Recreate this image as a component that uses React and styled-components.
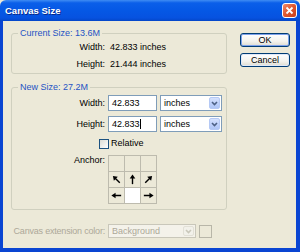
import React from "react"
import styled, { createGlobalStyle } from "styled-components"

const Global = createGlobalStyle`
  html, body {
    margin: 0;
    padding: 0;
    width: 300px;
    height: 252px;
    overflow: hidden;
    background: #ece9d8;
  }
  * { box-sizing: border-box; }
`

const Window = styled.div`
  width: 300px;
  height: 252px;
  display: flex;
  flex-direction: column;
  font-family: "Liberation Sans", Arial, sans-serif;
  font-size: 9px;
  color: #000;
  background: #ece9d8;
`

const TitleBar = styled.div`
  height: 21px;
  flex: none;
  display: flex;
  align-items: center;
  justify-content: space-between;
  padding: 0 3px 0 5px;
  background: linear-gradient(180deg, #3f8cf3 0%, #0b5fe9 14%, #0558e5 50%, #0652e0 85%, #0446c8 100%);
  border-radius: 6px 6px 0 0;
`

const Title = styled.span`
  color: #fff;
  font-weight: bold;
  font-size: 9.5px;
  text-shadow: 1px 1px 0 #0a2a8a;
`

const CloseButton = styled.div`
  width: 15px;
  height: 15px;
  border: 1px solid #fff;
  border-radius: 3px;
  background: linear-gradient(135deg, #f08a6c 0%, #e0572f 50%, #c8401c 100%);
  display: flex;
  align-items: center;
  justify-content: center;
`

const Frame = styled.div`
  flex: 1;
  display: flex;
  border: solid #0a45d2;
  border-width: 0 4px 4px 3px;
`

const Body = styled.div`
  flex: 1;
  display: flex;
  gap: 13px;
  padding: 7px 0 0 8px;
`

const Main = styled.div`
  width: 216px;
  display: flex;
  flex-direction: column;
`

const Group = styled.fieldset`
  margin: ${p => p.$mt || 0}px 0 0 0;
  padding: ${p => p.$pt}px 0 ${p => p.$pb}px 0;
  border: 1px solid #d0d0bf;
  border-radius: 3px;
  display: flex;
  flex-direction: column;
  gap: ${p => p.$gap}px;
  min-width: 0;
`

const Legend = styled.legend`
  margin-left: 6px;
  padding: 0 2px;
  color: #2553c4;
  font-size: 9px;
  line-height: 11px;
`

const Row = styled.div`
  display: grid;
  grid-template-columns: 93px auto;
  column-gap: ${p => p.$gap || 3}px;
  align-items: ${p => p.$align || "center"};
  justify-content: start;
  line-height: 11px;
`

const Label = styled.span`
  text-align: right;
  white-space: nowrap;
  color: ${p => (p.$disabled ? "#aca899" : "#000")};
  letter-spacing: ${p => (p.$tight ? "-0.2px" : "normal")};
`

const Value = styled.span`
  white-space: pre;
`

const Controls = styled.div`
  display: flex;
  gap: 3px;
`

const TextInput = styled.div`
  width: 49px;
  height: 16px;
  border: 1px solid #7f9db9;
  background: #fff;
  padding-left: 3px;
  display: flex;
  align-items: center;
`

const Caret = styled.span`
  width: 1px;
  height: 10px;
  background: #000;
`

const Select = styled.div`
  width: ${p => p.$w}px;
  height: ${p => p.$h || 16}px;
  border: 1px solid ${p => (p.$disabled ? "#c9c7ba" : "#7f9db9")};
  background: ${p => (p.$disabled ? "#f4f2ea" : "#fff")};
  color: ${p => (p.$disabled ? "#aca899" : "#000")};
  display: flex;
  align-items: center;
  justify-content: space-between;
  padding: 1px 1px 1px 3px;
`

const DropButton = styled.div`
  width: 11px;
  align-self: stretch;
  border-radius: 2px;
  display: flex;
  align-items: center;
  justify-content: center;
  background: ${p =>
    p.$disabled
      ? "#f2f1ea"
      : "linear-gradient(180deg, #d6e2fd 0%, #bccffa 60%, #afc6f6 100%)"};
  border: 1px solid ${p => (p.$disabled ? "#e2e0d6" : "#b5c9f5")};
`

const CheckRow = styled.div`
  display: flex;
  align-items: center;
  gap: 2px;
  padding-left: 87px;
  margin-top: 1px;
  margin-bottom: 1px;
  line-height: 11px;
`

const CheckBox = styled.span`
  width: 10px;
  height: 10px;
  border: 1px solid #1c5180;
  background: linear-gradient(135deg, #dcdcd5 0%, #fff 100%);
`

const AnchorGrid = styled.div`
  display: grid;
  grid-template-columns: repeat(3, 15px);
  grid-template-rows: repeat(3, 15px);
  gap: 1px;
  padding: 1px;
  background: #bdbbae;
  width: 49px;
`

const Cell = styled.div`
  background: ${p => (p.$active ? "#fff" : "#ece9d8")};
  display: flex;
  align-items: center;
  justify-content: center;
`

const ExtRow = styled.div`
  display: grid;
  grid-template-columns: 94px auto auto;
  column-gap: 3px;
  align-items: center;
  justify-content: start;
  margin-top: 14px;
  line-height: 11px;
`

const Swatch = styled.span`
  width: 13px;
  height: 13px;
  border: 1px solid #b8b6a8;
  background: #ece9d8;
`

const Buttons = styled.div`
  display: flex;
  flex-direction: column;
  gap: 6px;
  padding-top: 5px;
`

const Button = styled.div`
  width: 50px;
  height: 14px;
  border: 1px solid #003c74;
  border-radius: 3px;
  background: linear-gradient(180deg, #ffffff 0%, #f4f3ee 60%, #dedcd0 100%);
  box-shadow: inset 0 0 0 1px ${p => (p.$default ? "#7ea2ec" : "#dfe8f8")};
  display: flex;
  align-items: center;
  justify-content: center;
  font-size: 9px;
`

const Chevron = ({ color }) => (
  <svg width="7" height="5" viewBox="0 0 7 5">
    <path d="M1 1 L3.5 3.5 L6 1" fill="none" stroke={color} strokeWidth="1.6" />
  </svg>
)

const Arrow = ({ angle }) => (
  <svg width="13" height="13" viewBox="0 0 14 14" style={{ transform: `rotate(${angle}deg)` }}>
    <line x1="7" y1="12" x2="7" y2="5" stroke="#000" strokeWidth="1.5" />
    <polygon points="7,1.5 4,6 10,6" fill="#000" />
  </svg>
)

const anchorCells = [null, null, null, -45, 0, 45, -90, "active", 90]

function InfoRow({ label, value }) {
  return (
    <Row $gap={5}>
      <Label>{label}</Label>
      <Value>{value}</Value>
    </Row>
  )
}

function SizeRow({ label, value, caret }) {
  return (
    <Row>
      <Label>{label}</Label>
      <Controls>
        <TextInput>
          {value}
          {caret && <Caret />}
        </TextInput>
        <Select $w={62}>
          inches
          <DropButton>
            <Chevron color="#4d6185" />
          </DropButton>
        </Select>
      </Controls>
    </Row>
  )
}

export default function App() {
  return (
    <Window>
      <Global />
      <TitleBar>
        <Title>Canvas Size</Title>
        <CloseButton>
          <svg width="9" height="9" viewBox="0 0 9 9">
            <path d="M1.5 1.5 L7.5 7.5 M7.5 1.5 L1.5 7.5" stroke="#fff" strokeWidth="1.8" />
          </svg>
        </CloseButton>
      </TitleBar>
      <Frame>
        <Body>
          <Main>
            <Group $pt={3} $pb={3} $gap={6}>
              <Legend>Current Size: 13.6M</Legend>
              <InfoRow label="Width:" value="42.833 inches" />
              <InfoRow label="Height:" value="21.444 inches" />
            </Group>
            <Group $mt={8} $pt={2} $pb={5} $gap={5}>
              <Legend>New Size: 27.2M</Legend>
              <SizeRow label="Width:" value="42.833" />
              <SizeRow label="Height:" value="42.833" caret />
              <CheckRow>
                <CheckBox />
                <span>Relative</span>
              </CheckRow>
              <Row $align="start">
                <Label>Anchor:</Label>
                <AnchorGrid>
                  {anchorCells.map((c, i) => (
                    <Cell key={i} $active={c === "active"}>
                      {typeof c === "number" && <Arrow angle={c} />}
                    </Cell>
                  ))}
                </AnchorGrid>
              </Row>
            </Group>
            <ExtRow>
              <Label $disabled $tight>Canvas extension color:</Label>
              <Select $w={88} $h={14} $disabled>
                Background
                <DropButton $disabled>
                  <Chevron color="#c9c7ba" />
                </DropButton>
              </Select>
              <Swatch />
            </ExtRow>
          </Main>
          <Buttons>
            <Button $default>OK</Button>
            <Button>Cancel</Button>
          </Buttons>
        </Body>
      </Frame>
    </Window>
  )
}
